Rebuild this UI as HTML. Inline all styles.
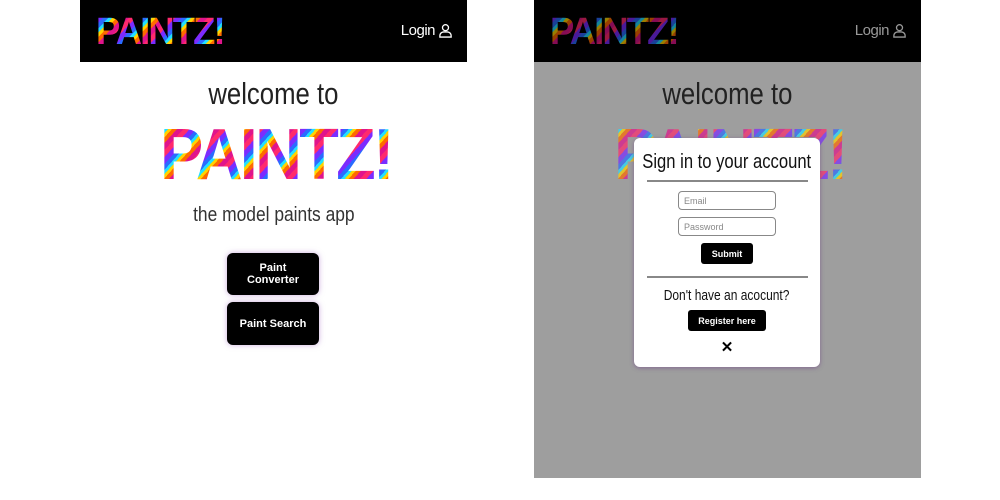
<!DOCTYPE html>
<html><head><style>
*{margin:0;padding:0;box-sizing:border-box}
body{width:1000px;height:500px;background:#fff;position:relative;overflow:hidden;font-family:"Liberation Sans",sans-serif}
.panel{position:absolute;top:0;width:387px;height:478px}
.hdr{position:absolute;left:0;top:0;width:100%;height:62px;background:#000}
.rb{background:repeating-linear-gradient(135deg,#ff2a6d 0 5px,#7b2cff 5px 10px,#2a6bff 10px 14px,#22e0ff 14px 17px,#ffd400 17px 20px,#ff6a00 20px 24px,#e0148c 24px 29px);-webkit-background-clip:text;background-clip:text;color:transparent;font-weight:900;font-family:"Liberation Sans",sans-serif;position:absolute;white-space:nowrap;transform-origin:left top}
.login{position:absolute;right:14px;top:22px;color:#fff;font-size:15px;letter-spacing:-0.5px;display:flex;align-items:center;gap:3px}
.ct{position:absolute;left:-100px;right:-100px;text-align:center;white-space:nowrap}
.ct span{display:inline-block;white-space:nowrap}
.welcome{top:76px;font-size:31px;color:#222;font-weight:300}
.welcome span{transform:scaleX(.83)}
.sub{top:204px;font-size:20px;color:#333}
.sub span{transform:scaleX(.87)}
.btn{position:absolute;background:#000;color:#fff;font-weight:bold;font-size:11px;text-align:center;border-radius:6px;display:flex;align-items:center;justify-content:center;box-shadow:0 0 6px rgba(170,120,200,.6)}
</style></head><body>
<div class="panel" style="left:80px">
 <div class="hdr">
  <div class="rb" style="left:16px;top:11px;font-size:38px;letter-spacing:-2px;transform:scaleX(.96)">PAINTZ!</div>
  <div class="login">Login <svg width="15" height="15" viewBox="0 0 16 16" fill="none" stroke="#fff" stroke-width="1.4"><circle cx="8" cy="5" r="3.2"/><path d="M2 15v-1.5a4 4 0 0 1 4-4h4a4 4 0 0 1 4 4V15z"/></svg></div>
 </div>
 <div class="ct welcome"><span>welcome to</span></div>
 <div class="rb" style="left:80px;top:114px;font-size:72px;letter-spacing:-3px;transform:scaleX(.9)">PAINTZ!</div>
 <div class="ct sub"><span>the model paints app</span></div>
 <div class="btn" style="left:147px;top:253px;width:92px;height:42px">Paint<br>Converter</div>
 <div class="btn" style="left:147px;top:302px;width:92px;height:43px">Paint Search</div>
</div>
<div class="panel" style="left:534px;background:#9e9e9e">
 <div class="hdr">
  <div class="rb" style="left:16px;top:11px;font-size:38px;letter-spacing:-2px;opacity:.6;transform:scaleX(.96)">PAINTZ!</div>
  <div class="login" style="color:#999">Login <svg width="15" height="15" viewBox="0 0 16 16" fill="none" stroke="#999" stroke-width="1.4"><circle cx="8" cy="5" r="3.2"/><path d="M2 15v-1.5a4 4 0 0 1 4-4h4a4 4 0 0 1 4 4V15z"/></svg></div>
 </div>
 <div class="ct welcome"><span>welcome to</span></div>
 <div class="rb" style="left:80px;top:114px;font-size:72px;letter-spacing:-3px;opacity:.7;transform:scaleX(.9)">PAINTZ!</div>
 <div style="position:absolute;left:100px;top:138px;width:186px;height:229px;background:#fff;border-radius:6px;box-shadow:0 1px 4px rgba(120,80,140,.7)">
  <div class="ct" style="top:13px;font-size:20px;color:#111"><span style="transform:scaleX(.83)">Sign in to your account</span></div>
  <div style="position:absolute;left:13px;top:42px;width:161px;height:2px;background:#888"></div>
  <div style="position:absolute;left:44px;top:53px;width:98px;height:19px;border:1px solid #888;border-radius:4px;font-size:9px;color:#888;padding:4px 5px">Email</div>
  <div style="position:absolute;left:44px;top:79px;width:98px;height:19px;border:1px solid #888;border-radius:4px;font-size:9px;color:#888;padding:4px 5px">Password</div>
  <div class="btn" style="left:67px;top:105px;width:52px;height:21px;font-size:9px;box-shadow:none;border-radius:3px">Submit</div>
  <div style="position:absolute;left:13px;top:138px;width:161px;height:2px;background:#888"></div>
  <div class="ct" style="top:149px;font-size:15px;color:#111"><span style="transform:scaleX(.8)">Don't have an acocunt?</span></div>
  <div class="btn" style="left:54px;top:172px;width:78px;height:21px;font-size:9px;box-shadow:none;border-radius:3px">Register here</div>
  <div class="ct" style="top:200px;font-size:15px;font-weight:bold">✕</div>
 </div>
</div>
</body></html>
